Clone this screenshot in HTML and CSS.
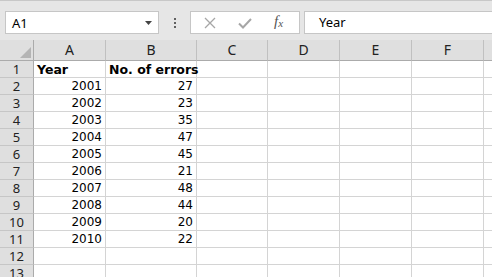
FILE: index.html
```html
<html>

<head>
    <meta charset="UTF-8">
    <link rel="stylesheet" href="styles.css">
</head>

<body>
    <div class="bar">
        <div class="namebox">
            <span>A1</span>
            <svg class="arrow" width="7" height="4" viewBox="0 0 7 4"><path d="M0 0h7L3.5 4z" fill="#444"/></svg>
        </div>
        <div class="dots"><i></i><i></i><i></i></div>
        <div class="buttons">
            <svg width="12" height="12" viewBox="0 0 12 12"><path d="M1 1L11 11M11 1L1 11" stroke="#a6a6a6" stroke-width="1.3" fill="none"/></svg>
            <svg width="14" height="12" viewBox="0 0 14 12"><path d="M1 6.5L5 10.5L13 2" stroke="#a6a6a6" stroke-width="2" fill="none"/></svg>
            <span class="fx">f<sub>x</sub></span>
        </div>
        <div class="formula">Year</div>
    </div>

    <div class="sheet" id="sheet">
        <div class="corner"><span class="tri"></span></div>
        <div class="colhead">A</div>
        <div class="colhead">B</div>
        <div class="colhead">C</div>
        <div class="colhead">D</div>
        <div class="colhead">E</div>
        <div class="colhead">F</div>
        <div class="colhead last"></div>
    </div>

    <script>
        (function () {
            let data = [
                ['Year', 'No. of errors'],
                [2001, 27], [2002, 23], [2003, 35], [2004, 47], [2005, 45],
                [2006, 21], [2007, 48], [2008, 44], [2009, 20], [2010, 22],
                ['', ''], ['', '']
            ];
            let sheet = document.getElementById('sheet');

            data.forEach(function (row, i) {
                let head = document.createElement('div');
                head.className = 'rowhead';
                head.innerText = i + 1;
                sheet.appendChild(head);

                for (let c = 0; c < 7; c++) {
                    let cell = document.createElement('div');
                    cell.className = 'cell';
                    if (c < 2 && row[c] !== '') {
                        cell.innerText = row[c];
                        if (typeof row[c] === 'number') cell.className += ' num';
                        else cell.className += ' bold';
                    }
                    if (c === 6) cell.className += ' last';
                    sheet.appendChild(cell);
                }
            });
        })();
    </script>
</body>

</html>
```

FILE: styles.css
```css
body {
    margin: 0;
    background-color: #e6e6e6;
    font-family: 'Noto Sans', sans-serif;
    overflow: hidden;
}

.bar {
    height: 40px;
    box-sizing: border-box;
    border-top: 1px solid #c8c8c8;
    padding: 10px 0 0 5px;
    display: flex;
    align-items: flex-start;
}

.namebox {
    width: 154px;
    height: 23px;
    box-sizing: border-box;
    border: 1px solid #c6c6c6;
    background-color: #fff;
    display: flex;
    align-items: center;
    justify-content: space-between;
    padding: 0 6px 0 6px;
    font-size: 13px;
    color: #000;
}

.dots {
    width: 31px;
    height: 23px;
    display: flex;
    flex-direction: column;
    align-items: center;
    justify-content: center;
    gap: 2px;
}

.dots i {
    width: 2px;
    height: 2px;
    background-color: #606060;
}

.buttons {
    width: 110px;
    height: 23px;
    box-sizing: border-box;
    border: 1px solid #c6c6c6;
    background-color: #fff;
    display: flex;
    align-items: center;
    padding-left: 13px;
    gap: 22px;
}

.buttons .fx {
    font-family: 'Liberation Serif', serif;
    font-style: italic;
    font-size: 15px;
    line-height: 15px;
    color: #555;
}

.buttons .fx sub {
    font-size: 11px;
    vertical-align: -1px;
}

.formula {
    flex: 1;
    margin-left: 4px;
    height: 23px;
    box-sizing: border-box;
    border: 1px solid #c6c6c6;
    border-right: none;
    background-color: #fff;
    font-size: 13px;
    line-height: 21px;
    padding-left: 14px;
    color: #000;
}

.sheet {
    display: grid;
    grid-template-columns: 34px 72px 91px 71px 72px 72px 72px 1fr;
    grid-template-rows: 21px;
    grid-auto-rows: 17px;
    background-color: #fff;
}

.corner,
.colhead {
    background-color: #dfdfdf;
    border-bottom: 1px solid #ababab;
    box-sizing: border-box;
}

.corner {
    border-right: 1px solid #ababab;
    position: relative;
}

.tri {
    position: absolute;
    right: 2px;
    bottom: 2px;
    width: 0;
    height: 0;
    border-left: 11px solid transparent;
    border-bottom: 11px solid #b4b4b4;
}

.colhead {
    border-right: 1px solid #c0c0c0;
    text-align: center;
    font-size: 14px;
    line-height: 20px;
    color: #222;
}

.rowhead {
    background-color: #dfdfdf;
    border-right: 1px solid #ababab;
    border-bottom: 1px solid #c6c6c6;
    box-sizing: border-box;
    text-align: center;
    font-size: 13px;
    line-height: 16px;
    color: #222;
}

.cell {
    border-right: 1px solid #d4d4d4;
    border-bottom: 1px solid #d4d4d4;
    box-sizing: border-box;
    font-family: 'DejaVu Sans', sans-serif;
    font-size: 12px;
    line-height: 17px;
    padding: 0 3px;
    white-space: nowrap;
    color: #000;
}

.cell.num {
    text-align: right;
}

.cell.bold {
    font-weight: bold;
    font-size: 12.5px;
}

.last {
    border-right: none;
}
```
